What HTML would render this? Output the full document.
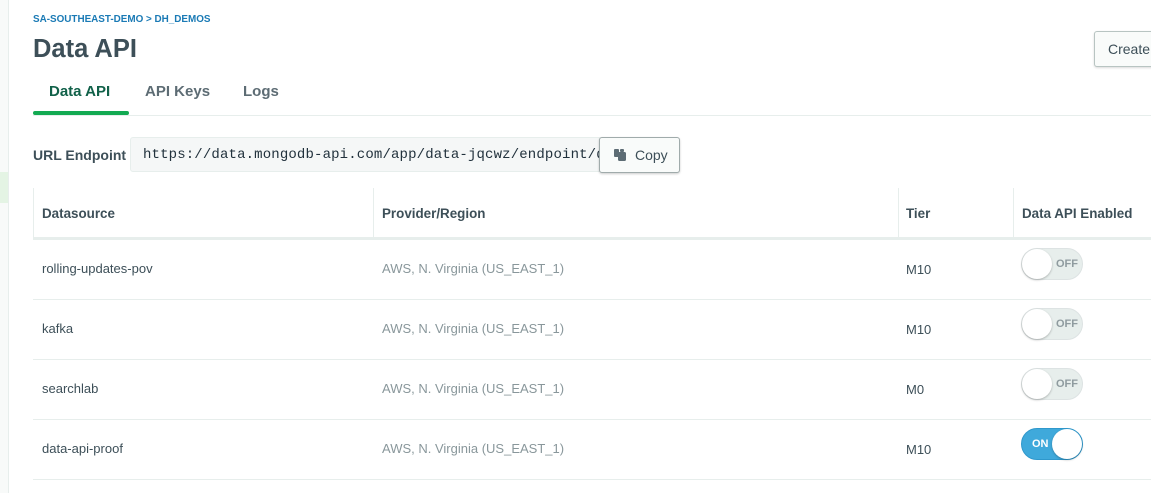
<!DOCTYPE html>
<html><head><style>
*{box-sizing:border-box;margin:0;padding:0}
body{width:1151px;height:493px;overflow:hidden;background:#fff;font-family:"Liberation Sans",sans-serif;color:#3d4f58;position:relative}
.side{position:absolute;left:0;top:0;width:9px;height:493px;background:#f8faf9;border-right:1px solid #e7eeec}
.sidehl{position:absolute;left:0;top:172px;width:8px;height:31px;background:#e4f4e4}
.abs{position:absolute}
.bc{left:33px;top:14px;font-size:9.9px;font-weight:bold;color:#1a7ab5}
.title{left:33px;top:35px;font-size:25.5px;font-weight:bold;color:#3d4f58}
.tab{top:83px;font-size:15px;font-weight:bold;color:#5d6c74}
.create{left:1094px;top:31px;width:70px;height:36px;border:1px solid #b8c4c2;border-radius:3px;background:#f9fbfa;box-shadow:0 1px 2px rgba(0,0,0,.15);font-size:14px;padding:9px 0 0 13px;color:#3d4f58}
.url{left:130px;top:137px;width:472px;height:35px;background:#f5f7f7;border:1px solid #e7eeec;border-radius:3px;font-family:"Liberation Mono",monospace;font-size:14px;letter-spacing:0.15px;padding:9px 0 0 12px;white-space:nowrap;overflow:hidden;color:#21313c}
.copy{left:599px;top:137px;width:81px;height:36px;border:1px solid #a0abab;border-radius:3px;background:#f9fbfa;box-shadow:0 1px 2px rgba(0,0,0,.2);font-size:14px;padding:9px 0 0 35px;color:#3d4f58}
.hd{top:188px;height:52px;border-bottom:3px solid #e7eeec}
.th{position:absolute;top:206px;font-size:13.4px;font-weight:bold;color:#3d4f58}
.vl{position:absolute;top:188px;width:1px;height:49px;background:#e7eeec}
.row{position:absolute;left:33px;width:1118px;height:1px;background:#e7eeec}
.td{position:absolute;font-size:13px;color:#3d4f58}
.td.g{color:#89979b}
.tog{position:absolute;left:1021px;width:62px;height:32px;border-radius:16px;background:#e7eeec;border:1px solid #dde3e3}
.tog .k{position:absolute;left:0;top:0;width:30px;height:30px;border-radius:50%;background:#fff;box-shadow:0 1px 2px rgba(0,0,0,.25)}
.tog span{position:absolute;left:34px;top:9px;font-size:11px;font-weight:bold;color:#8f9b9f}
.tog.on{background:#3fa9db;border-color:#2f98cc}
.tog.on .k{left:30px}
.tog.on span{left:10px;color:#fff}
</style></head><body>
<div class="side"></div><div class="sidehl"></div>
<div class="abs bc">SA-SOUTHEAST-DEMO &gt; DH_DEMOS</div>
<div class="abs title">Data API</div>
<div class="abs create">Create</div>
<div class="abs tab" style="left:49px;color:#116149">Data API</div>
<div class="abs tab" style="left:145px">API Keys</div>
<div class="abs tab" style="left:243px">Logs</div>
<div class="abs" style="left:33px;top:115px;width:1118px;height:1px;background:#e7eeec"></div>
<div class="abs" style="left:33px;top:111px;width:96px;height:4px;background:#13aa52;border-radius:2px"></div>
<div class="abs" style="left:33px;top:147px;font-size:14px;font-weight:bold;color:#3d4f58">URL Endpoint</div>
<div class="abs url">https://data.mongodb-api.com/app/data-jqcwz/endpoint/data/beta</div>
<div class="abs copy"><svg class="abs" style="left:13px;top:10px" width="14" height="14" viewBox="0 0 14 14"><rect x="1" y="1" width="5" height="8" rx="1" fill="#5d6c74"/><rect x="5" y="4" width="8" height="9" rx="1.5" fill="#5d6c74"/><rect x="7" y="1" width="4" height="3" rx="1" fill="#5d6c74"/></svg>Copy</div>
<div class="abs hd" style="left:33px;width:1118px"></div>
<div class="vl" style="left:33px"></div><div class="vl" style="left:373px"></div><div class="vl" style="left:898px"></div><div class="vl" style="left:1013px"></div>
<div class="th" style="left:42px">Datasource</div>
<div class="th" style="left:382px">Provider/Region</div>
<div class="th" style="left:906px">Tier</div>
<div class="th" style="left:1022px">Data API Enabled</div>

<div class="td" style="left:42px;top:261px">rolling-updates-pov</div>
<div class="td g" style="left:382px;top:261px">AWS, N. Virginia (US_EAST_1)</div>
<div class="td" style="left:906px;top:262px">M10</div>
<div class="tog" style="top:248px"><div class="k"></div><span>OFF</span></div>
<div class="row" style="top:299px"></div>

<div class="td" style="left:42px;top:321px">kafka</div>
<div class="td g" style="left:382px;top:321px">AWS, N. Virginia (US_EAST_1)</div>
<div class="td" style="left:906px;top:322px">M10</div>
<div class="tog" style="top:308px"><div class="k"></div><span>OFF</span></div>
<div class="row" style="top:359px"></div>

<div class="td" style="left:42px;top:381px">searchlab</div>
<div class="td g" style="left:382px;top:381px">AWS, N. Virginia (US_EAST_1)</div>
<div class="td" style="left:906px;top:382px">M0</div>
<div class="tog" style="top:368px"><div class="k"></div><span>OFF</span></div>
<div class="row" style="top:419px"></div>

<div class="td" style="left:42px;top:441px">data-api-proof</div>
<div class="td g" style="left:382px;top:441px">AWS, N. Virginia (US_EAST_1)</div>
<div class="td" style="left:906px;top:442px">M10</div>
<div class="tog on" style="top:428px"><div class="k"></div><span>ON</span></div>
<div class="row" style="top:479px"></div>
</body></html>
